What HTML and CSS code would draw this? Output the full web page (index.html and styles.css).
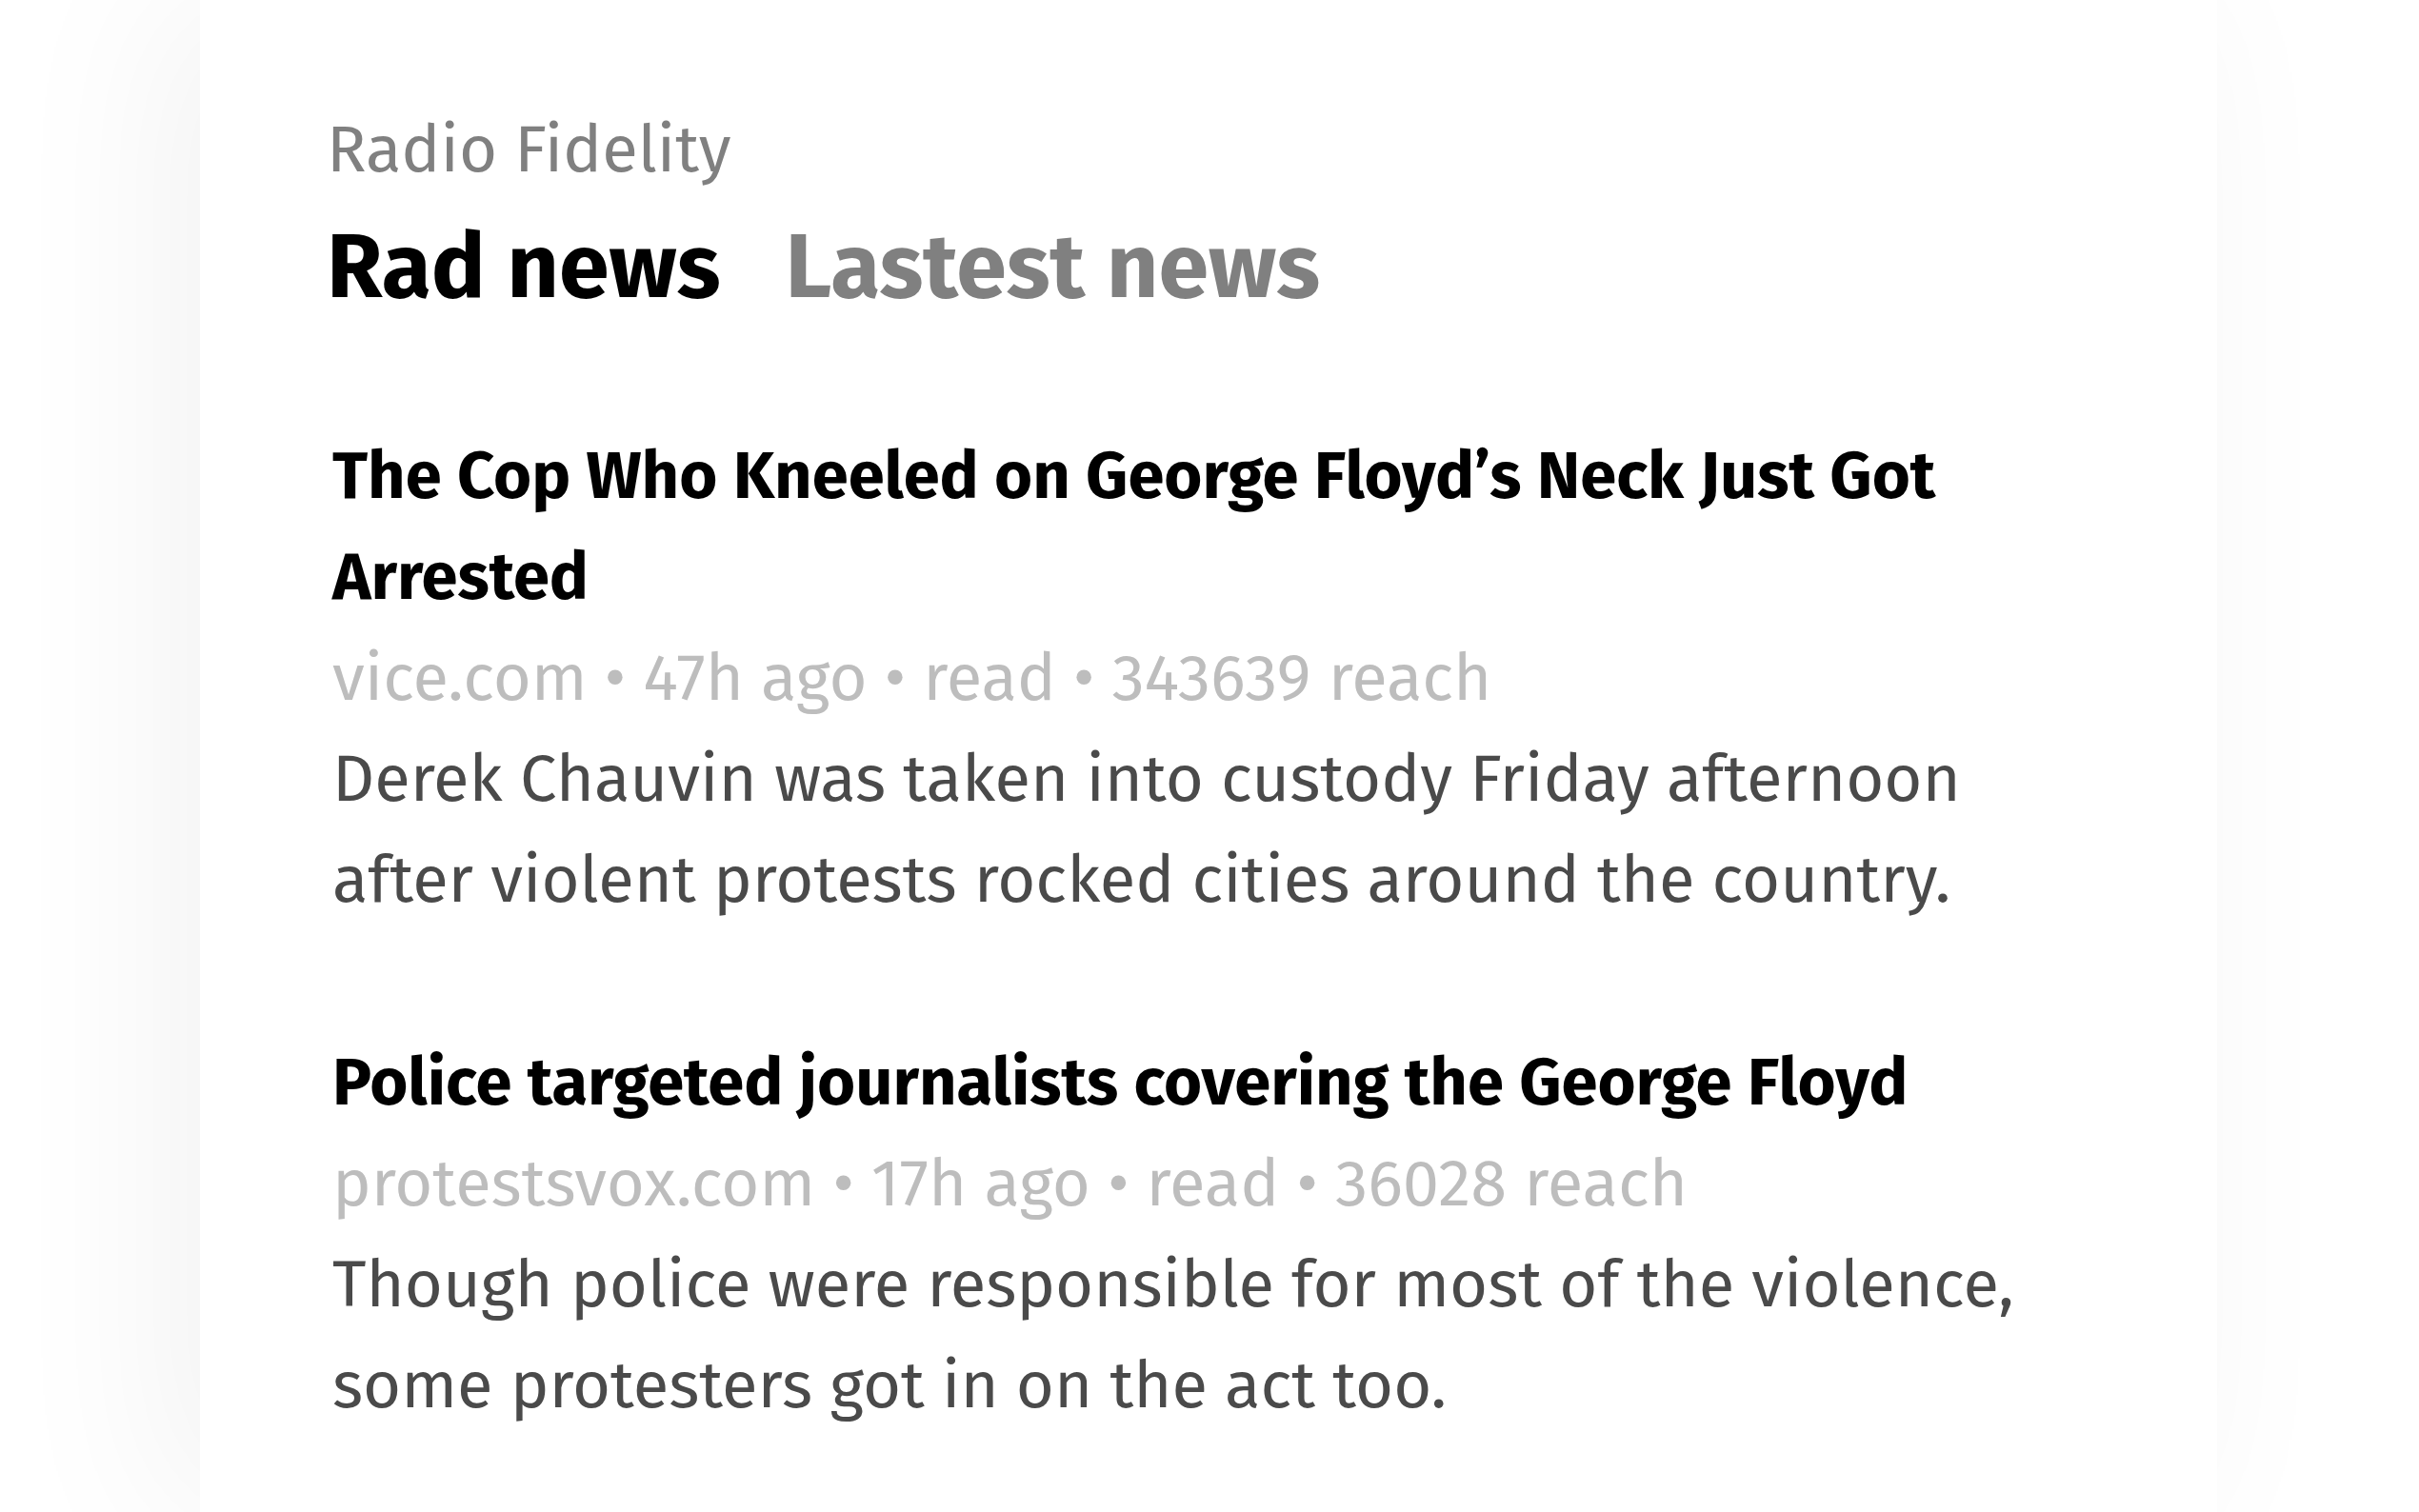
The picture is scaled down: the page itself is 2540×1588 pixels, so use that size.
FILE: index.html
```html
<!DOCTYPE html>
<html lang="en">
<head>
<meta charset="utf-8">
<title>Radio Fidelity</title>
<link rel="stylesheet" href="styles.css">
</head>
<body>
<main class="card">
  <header class="head">
    <div class="brand">Radio Fidelity</div>
    <nav class="tabs">
      <span class="tab tab-active">Rad news</span>
      <span class="tab">Lastest news</span>
    </nav>
  </header>
  <section class="list">
    <article class="item">
      <h2 class="title">The Cop Who Kneeled on George Floyd’s Neck Just Got Arrested</h2>
      <div class="meta">vice.com • 47h ago • read • 343639 reach</div>
      <p class="desc">Derek Chauvin was taken into custody Friday afternoon after violent protests rocked cities around the country.</p>
    </article>
    <article class="item">
      <h2 class="title">Police targeted journalists covering the George Floyd</h2>
      <div class="meta">protestsvox.com • 17h ago • read • 36028 reach</div>
      <p class="desc">Though police were responsible for most of the violence, some protesters got in on the act too.</p>
    </article>
  </section>
</main>
</body>
</html>
```

FILE: styles.css
```css
html, body {
  margin: 0;
  padding: 0;
  background: #ffffff;
}

body {
  font-family: "Fira Sans", "Open Sans", "Noto Sans", sans-serif;
  overflow: hidden;
  height: 1588px;
}

.card {
  box-sizing: border-box;
  margin-left: 210px;
  width: 2118px;
  height: 1588px;
  background: #ffffff;
  box-shadow: -40px 0 170px rgba(0, 0, 0, 0.05);
  padding: 104px 140px 0 139px;
}

.head {
  margin-left: -6px;
}

.brand {
  font-size: 68.8px;
  line-height: 106px;
  color: #808080;
  font-weight: 400;
}

.tabs {
  display: flex;
  gap: 68px;
  font-size: 95px;
  line-height: 140px;
  font-weight: 700;
}

.tab {
  color: #808080;
}

.tab-active {
  color: #000000;
}

.list {
  margin-top: 97px;
  display: flex;
  flex-direction: column;
  gap: 107px;
}

.title {
  margin: 0;
  font-size: 68.7px;
  line-height: 106px;
  font-weight: 700;
  color: #000000;
}

.meta {
  font-size: 68.7px;
  line-height: 106px;
  color: #bdbdbd;
}

.desc {
  margin: 0;
  font-size: 68.7px;
  line-height: 106px;
  color: #4a4a4a;
}
```
